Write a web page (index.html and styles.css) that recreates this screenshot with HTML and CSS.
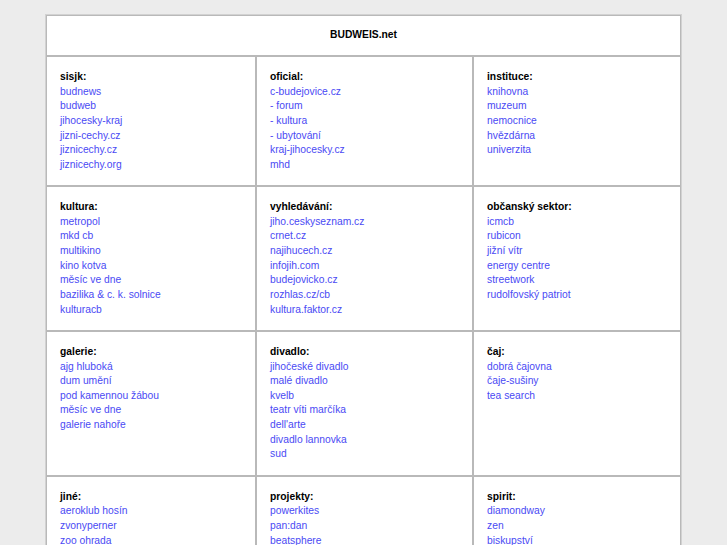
FILE: index.html
```html
<!DOCTYPE html>
<html lang="cs">
<head>
<meta charset="utf-8">
<title>BUDWEIS.net</title>
<link rel="stylesheet" href="styles.css">
</head>
<body>
<div class="board">
  <div class="title">BUDWEIS.net</div>

  <div class="cell"><div class="head">sisjk:</div>
    <a href="#">budnews</a><a href="#">budweb</a><a href="#">jihocesky-kraj</a><a href="#">jizni-cechy.cz</a><a href="#">jiznicechy.cz</a><a href="#">jiznicechy.org</a>
  </div>
  <div class="cell"><div class="head">oficial:</div>
    <a href="#">c-budejovice.cz</a><a href="#">- forum</a><a href="#">- kultura</a><a href="#">- ubytování</a><a href="#">kraj-jihocesky.cz</a><a href="#">mhd</a>
  </div>
  <div class="cell"><div class="head">instituce:</div>
    <a href="#">knihovna</a><a href="#">muzeum</a><a href="#">nemocnice</a><a href="#">hvězdárna</a><a href="#">univerzita</a>
  </div>

  <div class="cell"><div class="head">kultura:</div>
    <a href="#">metropol</a><a href="#">mkd cb</a><a href="#">multikino</a><a href="#">kino kotva</a><a href="#">měsíc ve dne</a><a href="#">bazilika &amp; c. k. solnice</a><a href="#">kulturacb</a>
  </div>
  <div class="cell"><div class="head">vyhledávání:</div>
    <a href="#">jiho.ceskyseznam.cz</a><a href="#">crnet.cz</a><a href="#">najihucech.cz</a><a href="#">infojih.com</a><a href="#">budejovicko.cz</a><a href="#">rozhlas.cz/cb</a><a href="#">kultura.faktor.cz</a>
  </div>
  <div class="cell"><div class="head">občanský sektor:</div>
    <a href="#">icmcb</a><a href="#">rubicon</a><a href="#">jižní vítr</a><a href="#">energy centre</a><a href="#">streetwork</a><a href="#">rudolfovský patriot</a>
  </div>

  <div class="cell"><div class="head">galerie:</div>
    <a href="#">ajg hluboká</a><a href="#">dum umění</a><a href="#">pod kamennou žábou</a><a href="#">měsíc ve dne</a><a href="#">galerie nahoře</a>
  </div>
  <div class="cell"><div class="head">divadlo:</div>
    <a href="#">jihočeské divadlo</a><a href="#">malé divadlo</a><a href="#">kvelb</a><a href="#">teatr víti marčíka</a><a href="#">dell'arte</a><a href="#">divadlo lannovka</a><a href="#">sud</a>
  </div>
  <div class="cell"><div class="head">čaj:</div>
    <a href="#">dobrá čajovna</a><a href="#">čaje-sušiny</a><a href="#">tea search</a>
  </div>

  <div class="cell"><div class="head">jiné:</div>
    <a href="#">aeroklub hosín</a><a href="#">zvonyperner</a><a href="#">zoo ohrada</a>
  </div>
  <div class="cell"><div class="head">projekty:</div>
    <a href="#">powerkites</a><a href="#">pan:dan</a><a href="#">beatsphere</a>
  </div>
  <div class="cell"><div class="head">spirit:</div>
    <a href="#">diamondway</a><a href="#">zen</a><a href="#">biskupství</a>
  </div>
</div>
</body>
</html>
```

FILE: styles.css
```css
html, body {
  margin: 0;
  padding: 0;
  background: #ececec;
}
body {
  padding-top: 14px;
  font-family: "Liberation Sans", Arial, sans-serif;
  font-size: 10.3px;
  color: #000;
}
.board {
  width: 635px;
  margin: 0 0 0 45px;
  display: grid;
  grid-template-columns: 210px 217px 208px;
  border: 1px solid #d2d2d2;
  background: #fff;
}
.title {
  grid-column: 1 / 4;
  box-sizing: border-box;
  height: 41px;
  border: 1px solid #b9b9b9;
  display: flex;
  align-items: center;
  justify-content: center;
  font-weight: bold;
  padding-bottom: 2px;
}
.cell {
  border: 1px solid #b9b9b9;
  padding: 13px 13px 12.5px 13px;
  line-height: 14.65px;
  display: flex;
  flex-direction: column;
  align-items: flex-start;
}
.head {
  font-weight: bold;
}
.cell a {
  color: #4a4af4;
  text-decoration: none;
}
```
